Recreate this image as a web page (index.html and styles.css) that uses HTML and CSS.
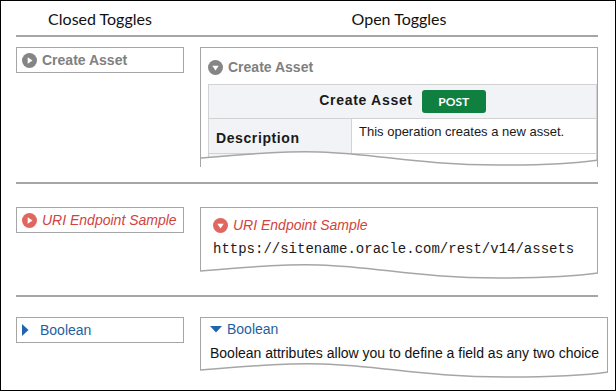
FILE: index.html
```html
<!DOCTYPE html>
<html lang="en">
<head>
    <meta charset="UTF-8">
    <title>Toggles</title>
    <link rel="stylesheet" href="styles.css">
</head>
<body>
    <div class="frame">
        <div class="head">
            <div>Closed Toggles</div>
            <div>Open Toggles</div>
        </div>

        <div class="row row-asset">
            <div class="closed">
                <svg class="icon" viewBox="0 0 14 14"><circle cx="7" cy="7" r="7" fill="#858585"/><path d="M5.3 4 L9.8 7 L5.3 10 Z" fill="#fff"/></svg>
                <span class="title-asset">Create Asset</span>
            </div>
            <div class="open open-asset">
                <div class="open-head">
                    <svg class="icon" viewBox="0 0 14 14"><circle cx="7" cy="7" r="7" fill="#858585"/><path d="M4 5.4 L10 5.4 L7 9.8 Z" fill="#fff"/></svg>
                    <span class="title-asset">Create Asset</span>
                </div>
                <table class="op">
                    <tr>
                        <th colspan="2"><span>Create Asset</span><span class="badge">POST</span></th>
                    </tr>
                    <tr>
                        <td class="key">Description</td>
                        <td class="val">This operation creates a new asset.</td>
                    </tr>
                    <tr>
                        <td class="key">&nbsp;</td>
                        <td class="val">&nbsp;</td>
                    </tr>
                </table>
                <svg class="tear" viewBox="0 0 400 18" preserveAspectRatio="none">
                    <path d="M0 9 C60 4 90 2 120 3 C180 5 220 16 300 16 C340 16 380 14 400 11 L400 18 L0 18 Z" fill="#fff"/>
                    <path d="M0 9 C60 4 90 2 120 3 C180 5 220 16 300 16 C340 16 380 14 400 11" fill="none" stroke="#a6a6a6" stroke-width="1.5" vector-effect="non-scaling-stroke"/>
                </svg>
            </div>
        </div>

        <div class="row row-uri">
            <div class="closed">
                <svg class="icon" viewBox="0 0 14 14"><circle cx="7" cy="7" r="7" fill="#e0675f"/><path d="M5.3 4 L9.8 7 L5.3 10 Z" fill="#fff"/></svg>
                <span class="title-uri">URI Endpoint Sample</span>
            </div>
            <div class="open open-uri">
                <div class="open-head">
                    <svg class="icon" viewBox="0 0 14 14"><circle cx="7" cy="7" r="7" fill="#e0675f"/><path d="M4 5.4 L10 5.4 L7 9.8 Z" fill="#fff"/></svg>
                    <span class="title-uri">URI Endpoint Sample</span>
                </div>
                <div class="code">https://sitename.oracle.com/rest/v14/assets</div>
                <svg class="tear" viewBox="0 0 400 18" preserveAspectRatio="none">
                    <path d="M0 9 C60 4 90 2 120 3 C180 5 220 16 300 16 C340 16 380 14 400 11 L400 18 L0 18 Z" fill="#fff"/>
                    <path d="M0 9 C60 4 90 2 120 3 C180 5 220 16 300 16 C340 16 380 14 400 11" fill="none" stroke="#a6a6a6" stroke-width="1.5" vector-effect="non-scaling-stroke"/>
                </svg>
            </div>
        </div>

        <div class="row row-bool">
            <div class="closed">
                <svg class="arrow" viewBox="0 0 7 12"><path d="M0 0 L6.5 6 L0 12 Z" fill="#1f64ad"/></svg>
                <span class="title-bool">Boolean</span>
            </div>
            <div class="open open-bool">
                <div class="open-head">
                    <svg class="arrow-down" viewBox="0 0 12 7"><path d="M0 0 L12 0 L6 6.5 Z" fill="#1f64ad"/></svg>
                    <span class="title-bool">Boolean</span>
                </div>
                <div class="text">Boolean attributes allow you to define a field as any two choice</div>
                <svg class="tear" viewBox="0 0 400 18" preserveAspectRatio="none">
                    <path d="M0 9 C60 4 90 2 120 3 C180 5 220 16 300 16 C340 16 380 14 400 11 L400 18 L0 18 Z" fill="#fff"/>
                    <path d="M0 9 C60 4 90 2 120 3 C180 5 220 16 300 16 C340 16 380 14 400 11" fill="none" stroke="#a6a6a6" stroke-width="1.5" vector-effect="non-scaling-stroke"/>
                </svg>
            </div>
        </div>
    </div>
</body>
</html>
```

FILE: styles.css
```css
body {
    margin: 0;
    padding: 0;
    background-color: #ffffff;
    font-family: "Liberation Sans", Arial, sans-serif;
}

.frame {
    width: 616px;
    height: 391px;
    border: 1px solid #000000;
    box-sizing: border-box;
    padding: 0 17px 0 15px;
}

.head {
    display: grid;
    grid-template-columns: 168px 1fr;
    column-gap: 16px;
    height: 34px;
    align-items: center;
    border-bottom: 2px solid #a6a6a6;
    font-family: Lato, "Open Sans", sans-serif;
    font-size: 16px;
    color: #111111;
    text-align: center;
}

.row {
    display: grid;
    grid-template-columns: 168px 1fr;
    column-gap: 16px;
    align-items: start;
    box-sizing: border-box;
}

.row-asset {
    height: 147px;
    padding-top: 10px;
    border-bottom: 2px solid #a6a6a6;
}

.row-uri {
    height: 113px;
    padding-top: 23px;
    border-bottom: 2px solid #a6a6a6;
}

.row-bool {
    padding-top: 20px;
}

.closed {
    display: flex;
    align-items: center;
    height: 26px;
    box-sizing: border-box;
    border: 1px solid #a6a6a6;
    padding-left: 5px;
}

.icon {
    width: 15px;
    height: 15px;
    flex: none;
    margin-right: 5px;
}

.arrow {
    width: 7px;
    height: 12px;
    flex: none;
    margin-right: 11px;
}

.arrow-down {
    width: 12px;
    height: 7px;
    flex: none;
    margin-right: 5px;
}

.title-asset {
    font-size: 14px;
    font-weight: bold;
    color: #808080;
}

.title-uri {
    font-size: 14px;
    font-style: italic;
    color: #d0443d;
}

.title-bool {
    font-size: 14px;
    color: #1f5f9f;
}

.open {
    position: relative;
    border: 1px solid #a6a6a6;
    border-bottom: none;
    box-sizing: border-box;
}

.open-head {
    display: flex;
    align-items: center;
}

.tear {
    position: absolute;
    left: -1px;
    bottom: 0;
    width: calc(100% + 2px);
    height: 18px;
}

/* create asset */
.open-asset {
    height: 120px;
    overflow: hidden;
    padding-left: 7px;
}

.open-asset .open-head {
    height: 36px;
    padding-top: 2px;
    box-sizing: border-box;
}

.op {
    width: 100%;
    border-collapse: collapse;
    font-size: 13px;
    color: #1a1a1a;
}

.op th,
.op td {
    border: 1px solid #d2d2d2;
}

.op th {
    height: 33px;
    background-color: #f2f3f7;
    font-size: 14px;
    letter-spacing: 0.7px;
    padding: 0;
}

.badge {
    display: inline-block;
    margin-left: 9px;
    width: 64px;
    height: 23px;
    line-height: 23px;
    border-radius: 3px;
    background-color: #0f803f;
    color: #ffffff;
    font-family: Lato, "Open Sans", sans-serif;
    font-size: 12px;
    letter-spacing: 0;
    vertical-align: middle;
}

.op td {
    height: 29px;
    padding: 0 7px;
}

.op .key {
    width: 128px;
    background-color: #f2f3f7;
    font-size: 14px;
    font-weight: bold;
    letter-spacing: 0.6px;
    padding-top: 4px;
}

.op .val {
    vertical-align: top;
    padding-top: 5px;
}

/* uri */
.open-uri {
    height: 73px;
    padding: 9px 12px 0;
}

.code {
    margin-top: 8px;
    font-family: "Liberation Mono", "Courier New", monospace;
    font-size: 14px;
    color: #1a1a1a;
}

/* boolean */
.open-bool {
    height: 62px;
    padding: 3px 8px 0 9px;
}

.text {
    margin-top: 8px;
    font-size: 14px;
    color: #111111;
    white-space: nowrap;
}
```
